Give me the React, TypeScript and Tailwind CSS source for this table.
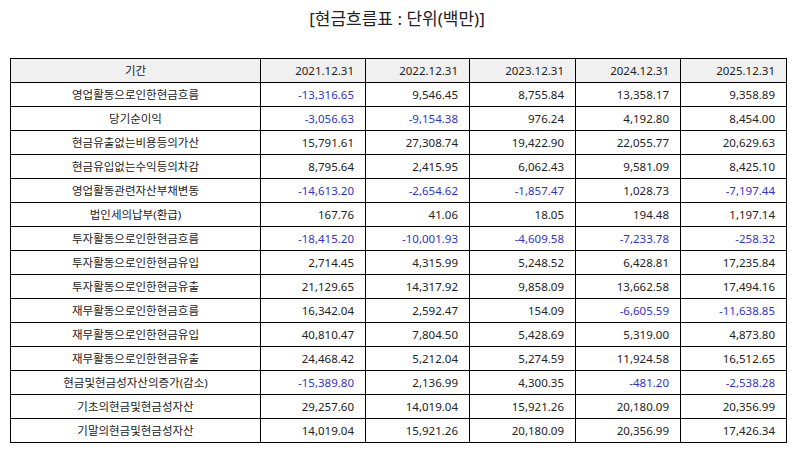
import React from "react";

const headers = ["2021.12.31", "2022.12.31", "2023.12.31", "2024.12.31", "2025.12.31"];

const rows: [string, string[]][] = [
  ["영업활동으로인한현금흐름", ["-13,316.65", "9,546.45", "8,755.84", "13,358.17", "9,358.89"]],
  ["당기순이익", ["-3,056.63", "-9,154.38", "976.24", "4,192.80", "8,454.00"]],
  ["현금유출없는비용등의가산", ["15,791.61", "27,308.74", "19,422.90", "22,055.77", "20,629.63"]],
  ["현금유입없는수익등의차감", ["8,795.64", "2,415.95", "6,062.43", "9,581.09", "8,425.10"]],
  ["영업활동관련자산부채변동", ["-14,613.20", "-2,654.62", "-1,857.47", "1,028.73", "-7,197.44"]],
  ["법인세의납부(환급)", ["167.76", "41.06", "18.05", "194.48", "1,197.14"]],
  ["투자활동으로인한현금흐름", ["-18,415.20", "-10,001.93", "-4,609.58", "-7,233.78", "-258.32"]],
  ["투자활동으로인한현금유입", ["2,714.45", "4,315.99", "5,248.52", "6,428.81", "17,235.84"]],
  ["투자활동으로인한현금유출", ["21,129.65", "14,317.92", "9,858.09", "13,662.58", "17,494.16"]],
  ["재무활동으로인한현금흐름", ["16,342.04", "2,592.47", "154.09", "-6,605.59", "-11,638.85"]],
  ["재무활동으로인한현금유입", ["40,810.47", "7,804.50", "5,428.69", "5,319.00", "4,873.80"]],
  ["재무활동으로인한현금유출", ["24,468.42", "5,212.04", "5,274.59", "11,924.58", "16,512.65"]],
  ["현금및현금성자산의증가(감소)", ["-15,389.80", "2,136.99", "4,300.35", "-481.20", "-2,538.28"]],
  ["기초의현금및현금성자산", ["29,257.60", "14,019.04", "15,921.26", "20,180.09", "20,356.99"]],
  ["기말의현금및현금성자산", ["14,019.04", "15,921.26", "20,180.09", "20,356.99", "17,426.34"]],
];

const colW = ["w-[250px]", "w-[105px]", "w-[104px]", "w-[106px]", "w-[105px]", "w-[106px]"];

export default function App() {
  return (
    <div
      className="w-[794px] h-[452px] bg-white text-[#222]"
      style={{ fontFamily: '"Noto Sans", "Noto Sans CJK KR", sans-serif' }}
    >
      <div className="pt-[6px] h-[58px] text-center text-[17px] leading-[25px] text-[#222]">
        [현금흐름표 : 단위(백만)]
      </div>
      <table className="ml-[10px] w-[776px] border-collapse table-fixed text-[11.5px]">
        <colgroup>
          {colW.map((c, i) => (
            <col key={i} className={c} />
          ))}
        </colgroup>
        <thead>
          <tr className="h-[24px] bg-[#f0f0f0]">
            <th className="border border-black font-normal text-center p-0">기간</th>
            {headers.map((h) => (
              <th key={h} className="border border-black font-normal text-right pr-[11px] p-0">
                {h}
              </th>
            ))}
          </tr>
        </thead>
        <tbody>
          {rows.map(([label, vals]) => (
            <tr key={label} className="h-[24px]">
              <td className="border border-black text-center p-0">{label}</td>
              {vals.map((v, i) => (
                <td
                  key={i}
                  className={
                    v.startsWith("-")
                      ? "border border-black text-right pr-[11px] p-0 text-[#3333cc]"
                      : "border border-black text-right pr-[11px] p-0"
                  }
                >
                  {v}
                </td>
              ))}
            </tr>
          ))}
        </tbody>
      </table>
    </div>
  );
}
